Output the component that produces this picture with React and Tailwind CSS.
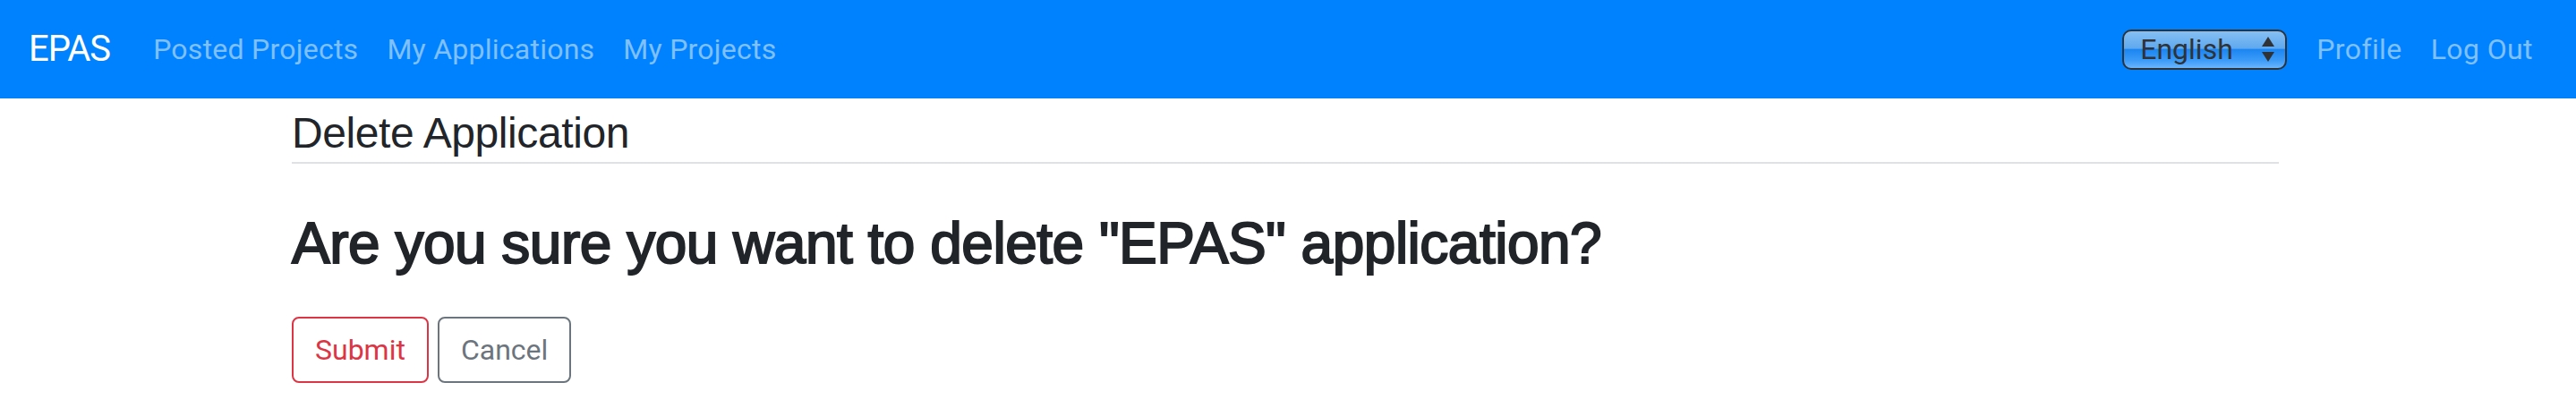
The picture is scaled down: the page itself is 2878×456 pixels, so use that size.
import React from 'react';

const links = ['Posted Projects', 'My Applications', 'My Projects'];

function LangSelect() {
  return (
    <div className="mr-[17px] flex h-[45px] w-[184px] items-center justify-between rounded-[10px] border-2 border-[#2f3338] bg-[linear-gradient(to_bottom,#86bff4,#5fa9ee_46%,#1b86f2_50%,#3d9cf8_80%,#69b6ff)] pl-[18px] pr-[12px] text-[32px] leading-none text-[#2f3338]">
      <span>English</span>
      <svg width="14" height="28" viewBox="0 0 14 28" fill="#2f3338">
        <polygon points="0,11 7,0 14,11" />
        <polygon points="0,17 14,17 7,28" />
      </svg>
    </div>
  );
}

export default function App() {
  return (
    <div className="min-h-[456px] bg-white">
      <nav className="flex h-[110px] items-center justify-between bg-[#0082ff] px-8 font-['Roboto',sans-serif]">
        <div className="flex items-center">
          <a href="#" className="mr-8 text-[40px] leading-[1.5] tracking-[-1px] text-white">EPAS</a>
          <ul className="flex">
            {links.map(l => (
              <li key={l}>
                <a href="#" className="block px-4 text-[32px] leading-[1.5] tracking-[0.25px] text-white/50">{l}</a>
              </li>
            ))}
          </ul>
        </div>
        <div className="flex items-center">
          <LangSelect />
          <a href="#" className="block px-4 text-[32px] leading-[1.5] tracking-[0.4px] text-white/50">Profile</a>
          <a href="#" className="block px-4 text-[32px] leading-[1.5] tracking-[0.4px] text-white/50">Log Out</a>
        </div>
      </nav>

      <main className="ml-[326px] w-[2220px] text-[#212529]">
        <h4 className="mt-[10px] border-b-2 border-[#dee2e6] pb-[3px] font-['Liberation_Sans',Arial,sans-serif] text-[48px] leading-[1.2] tracking-[-0.4px]">
          Delete Application
        </h4>
        <h2 className="mt-[51px] font-['Liberation_Sans',Arial,sans-serif] text-[64px] leading-[1.2] tracking-[-0.5px] [-webkit-text-stroke:2px_#212529]">
          Are you sure you want to delete "EPAS" application?
        </h2>
        <div className="mt-[44px] flex gap-[10px] font-['Roboto',sans-serif]">
          <button className="flex h-[74px] items-center rounded-[8px] border-2 border-[#dc3545] px-[24px] text-[32px] text-[#dc3545]">
            Submit
          </button>
          <button className="flex h-[74px] items-center rounded-[8px] border-2 border-[#6c757d] px-[24px] text-[32px] text-[#6c757d]">
            Cancel
          </button>
        </div>
      </main>
    </div>
  );
}
